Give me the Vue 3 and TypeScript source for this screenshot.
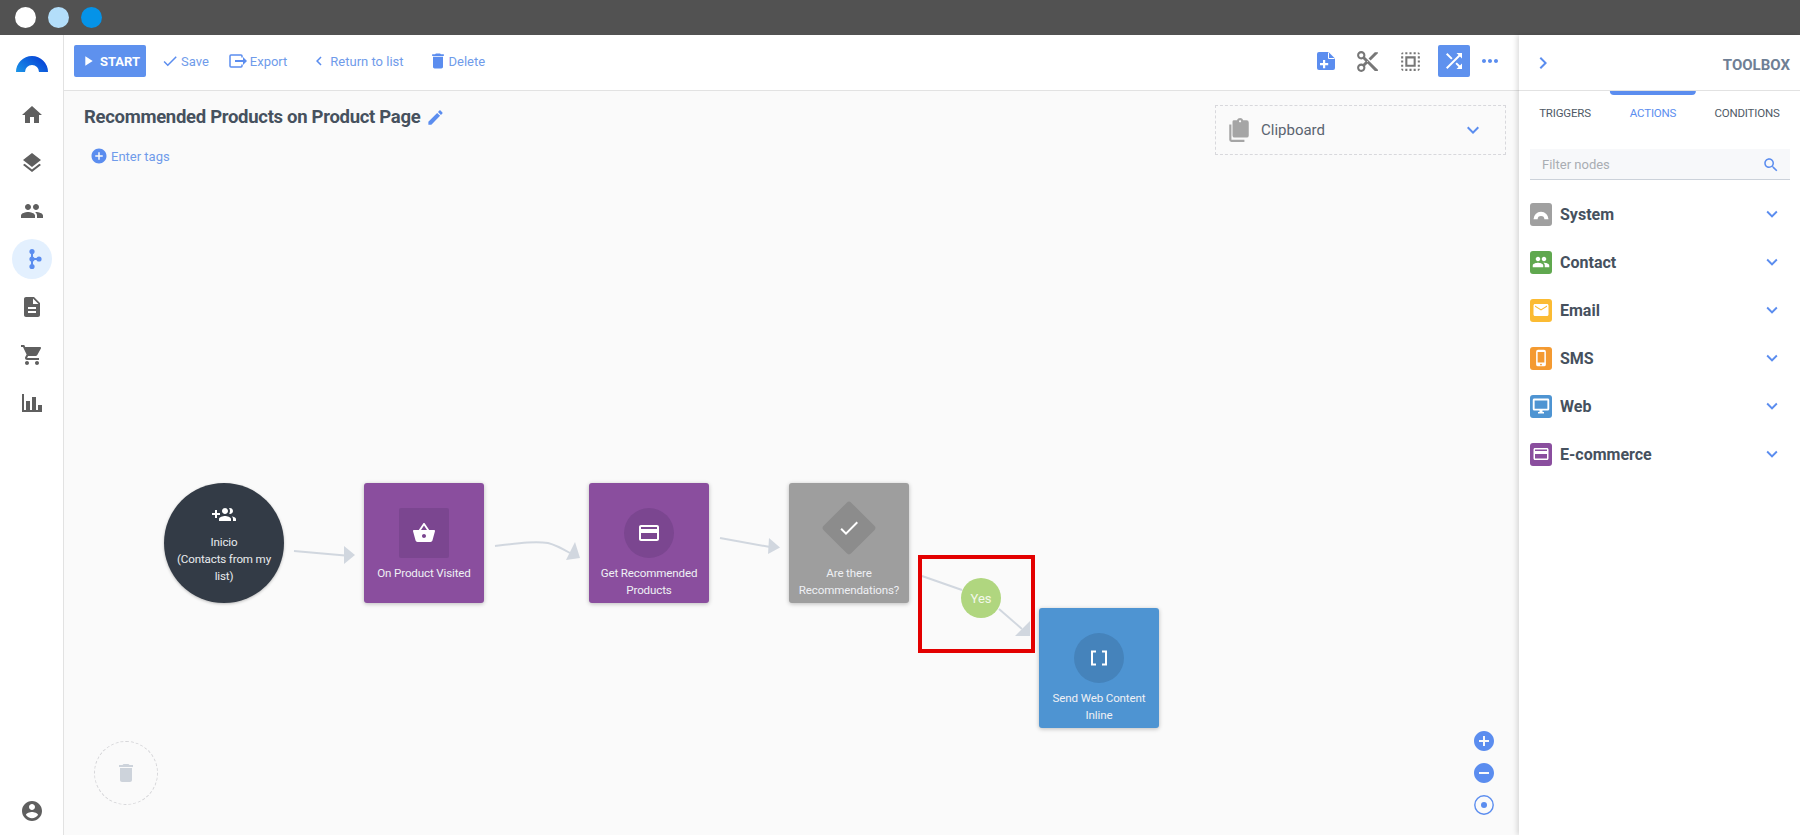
<script setup lang="ts">
const P = {
  home: 'M10 20v-6h4v6h5v-8h3L12 3 2 12h3v8z',
  layers: 'M11.99 18.54l-7.37-5.73L3 14.07l9 7 9-7-1.63-1.27-7.38 5.74zM12 16l7.36-5.73L21 9l-9-7-9 7 1.63 1.27L12 16z',
  people: 'M16 11c1.66 0 2.99-1.34 2.99-3S17.66 5 16 5c-1.66 0-3 1.34-3 3s1.34 3 3 3zm-8 0c1.66 0 2.99-1.34 2.99-3S9.66 5 8 5C6.34 5 5 6.34 5 8s1.34 3 3 3zm0 2c-2.33 0-7 1.17-7 3.5V19h14v-2.5c0-2.33-4.67-3.5-7-3.5zm8 0c-.29 0-.62.02-.97.05 1.16.84 1.97 1.97 1.97 3.45V19h6v-2.5c0-2.33-4.67-3.5-7-3.5z',
  doc: 'M14 2H6c-1.1 0-1.99.9-1.99 2L4 20c0 1.1.89 2 1.99 2H18c1.1 0 2-.9 2-2V8l-6-6zm2 16H8v-2h8v2zm0-4H8v-2h8v2zm-3-5V3.5L18.5 9H13z',
  cart: 'M7 18c-1.1 0-1.99.9-1.99 2S5.9 22 7 22s2-.9 2-2-.9-2-2-2zM1 2v2h2l3.6 7.59-1.35 2.45c-.16.28-.25.61-.25.96 0 1.1.9 2 2 2h12v-2H7.42c-.14 0-.25-.11-.25-.25l.03-.12.9-1.63h7.45c.75 0 1.41-.41 1.75-1.03l3.58-6.49c.08-.14.12-.31.12-.48 0-.55-.45-1-1-1H5.21l-.94-2H1zm16 16c-1.1 0-1.99.9-1.99 2s.89 2 1.99 2 2-.9 2-2-.9-2-2-2z',
  chart: 'M2 3h2v16h2v-9h4v9h2V6h4v13h2v-5h4v7H2z',
  account: 'M12 2C6.48 2 2 6.48 2 12s4.48 10 10 10 10-4.48 10-10S17.52 2 12 2zm0 3c1.66 0 3 1.34 3 3s-1.34 3-3 3-3-1.34-3-3 1.34-3 3-3zm0 14.2c-2.5 0-4.71-1.28-6-3.22.03-1.99 4-3.08 6-3.08 1.99 0 5.97 1.09 6 3.08-1.29 1.94-3.5 3.22-6 3.22z',
  play: 'M8 5v14l11-7z',
  check: 'M9 16.17L4.83 12l-1.42 1.41L9 19 21 7l-1.41-1.41z',
  del: 'M6 19c0 1.1.9 2 2 2h8c1.1 0 2-.9 2-2V7H6v12zM19 4h-3.5l-1-1h-5l-1 1H5v2h14V4z',
  edit: 'M3 17.25V21h3.75L17.81 9.94l-3.75-3.75L3 17.25zM20.71 7.04c.39-.39.39-1.02 0-1.41l-2.34-2.34c-.39-.39-1.02-.39-1.41 0l-1.83 1.83 3.75 3.75 1.83-1.83z',
  addCircle: 'M12 2C6.48 2 2 6.48 2 12s4.48 10 10 10 10-4.48 10-10S17.52 2 12 2zm5 11h-4v4h-2v-4H7v-2h4V7h2v4h4v2z',
  removeCircle: 'M12 2C6.48 2 2 6.48 2 12s4.48 10 10 10 10-4.48 10-10S17.52 2 12 2zm5 11H7v-2h10v2z',
  cut: 'M9.64 7.64c.23-.5.36-1.05.36-1.64 0-2.21-1.79-4-4-4S2 3.79 2 6s1.79 4 4 4c.59 0 1.14-.13 1.64-.36L10 12l-2.36 2.36C7.14 14.13 6.59 14 6 14c-2.21 0-4 1.79-4 4s1.79 4 4 4 4-1.79 4-4c0-.59-.13-1.14-.36-1.64L12 14l7 7h3v-1L9.64 7.64zM6 8c-1.1 0-2-.89-2-2s.9-2 2-2 2 .89 2 2-.9 2-2 2zm0 12c-1.1 0-2-.89-2-2s.9-2 2-2 2 .89 2 2-.9 2-2 2zm6-7.5c-.28 0-.5-.22-.5-.5s.22-.5.5-.5.5.22.5.5-.22.5-.5.5zM19 3l-6 6 2 2 7-7V3z',
  shuffle: 'M10.59 9.17L5.41 4 4 5.41l5.17 5.17 1.42-1.41zM14.5 4l2.04 2.04L4 18.59 5.41 20 17.96 7.46 20 9.5V4h-5.5zm.33 9.41l-1.41 1.41 3.13 3.13L14.5 20H20v-5.5l-2.04 2.04-3.13-3.13z',
  select: 'M3 5h2V3c-1.1 0-2 .9-2 2zm0 8h2v-2H3v2zm4 8h2v-2H7v2zM3 9h2V7H3v2zm10-6h-2v2h2V3zm6 0v2h2c0-1.1-.9-2-2-2zM5 21v-2H3c0 1.1.9 2 2 2zm-2-4h2v-2H3v2zM9 3H7v2h2V3zm2 18h2v-2h-2v2zm8-8h2v-2h-2v2zm0 8c1.1 0 2-.9 2-2h-2v2zm0-12h2V7h-2v2zm0 8h2v-2h-2v2zm-4 4h2v-2h-2v2zm0-16h2V3h-2v2zM7 17h10V7H7v10zm2-8h6v6H9V9z',
  more: 'M6 10c-1.1 0-2 .9-2 2s.9 2 2 2 2-.9 2-2-.9-2-2-2zm12 0c-1.1 0-2 .9-2 2s.9 2 2 2 2-.9 2-2-.9-2-2-2zm-6 0c-1.1 0-2 .9-2 2s.9 2 2 2 2-.9 2-2-.9-2-2-2z',
  down: 'M7.41 8.59L12 13.17l4.59-4.58L18 10l-6 6-6-6z',
  left: 'M15.41 7.41L14 6l-6 6 6 6 1.41-1.41L10.83 12z',
  right: 'M10 6L8.59 7.41 13.17 12l-4.58 4.59L10 18l6-6z',
  search: 'M15.5 14h-.79l-.28-.27C15.41 12.59 16 11.11 16 9.5 16 5.91 13.09 3 9.5 3S3 5.91 3 9.5 5.91 16 9.5 16c1.61 0 3.09-.59 4.23-1.57l.27.28v.79l5 4.99L20.49 19l-4.99-5zm-6 0C7.01 14 5 11.99 5 9.5S7.01 5 9.5 5 14 7.01 14 9.5 11.99 14 9.5 14z',
  clip: 'M3 7h2v14h12v2H5a2 2 0 0 1-2-2zM19 3h-3.2C15.4 1.8 14.3 1 13 1s-2.4.8-2.8 2H7a1.5 1.5 0 0 0-1 1.5V17a2 2 0 0 0 2 2h11a2 2 0 0 0 2-2V5a2 2 0 0 0-2-2zm-6 0c.55 0 1 .45 1 1s-.45 1-1 1-1-.45-1-1 .45-1 1-1z',
  basket: 'M17.21 9l-4.38-6.56c-.19-.28-.51-.42-.83-.42-.32 0-.64.14-.83.43L6.79 9H2c-.55 0-1 .45-1 1 0 .09.01.18.04.27l2.54 9.27c.23.84 1 1.46 1.92 1.46h13c.92 0 1.69-.62 1.93-1.46l2.54-9.27L23 10c0-.55-.45-1-1-1h-4.79zM9 9l3-4.4L15 9H9zm3 8c-1.1 0-2-.9-2-2s.9-2 2-2 2 .9 2 2-.9 2-2 2z',
  card: 'M20 4H4c-1.11 0-1.99.89-1.99 2L2 18c0 1.11.89 2 2 2h16c1.11 0 2-.89 2-2V6c0-1.11-.89-2-2-2zm0 14H4v-6h16v6zm0-10H4V6h16v2z',
  groupAdd: 'M8 10H5V7H3v3H0v2h3v3h2v-3h3v-2zm10 1c1.66 0 2.99-1.34 2.99-3S19.66 5 18 5c-.32 0-.63.05-.91.14.57.81.9 1.79.9 2.86s-.34 2.04-.9 2.86c.28.09.59.14.91.14zm-5 0c1.66 0 2.99-1.34 2.99-3S14.66 5 13 5s-3 1.34-3 3 1.34 3 3 3zm6.62 2.16c.83.73 1.38 1.66 1.38 2.84v2h3v-2c0-1.54-2.37-2.49-4.38-2.84zM13 13c-2 0-6 1-6 3v2h12v-2c0-2-4-3-6-3z',
  mail: 'M20 4H4c-1.1 0-1.99.9-1.99 2L2 18c0 1.1.9 2 2 2h16c1.1 0 2-.9 2-2V6c0-1.1-.9-2-2-2zm0 3.5l-8 5-8-5V6l8 5 8-5z',
  phone: 'M16 1H8a2.5 2.5 0 0 0-2.5 2.5v17A2.5 2.5 0 0 0 8 23h8a2.5 2.5 0 0 0 2.5-2.5v-17A2.5 2.5 0 0 0 16 1zm-4 21a1.2 1.2 0 1 1 0-2.4 1.2 1.2 0 0 1 0 2.4zm4.5-4h-9V4h9z',
  monitor: 'M21 2H3c-1.1 0-2 .9-2 2v12c0 1.1.9 2 2 2h7v2H8v2h8v-2h-2v-2h7c1.1 0 2-.9 2-2V4c0-1.1-.9-2-2-2zm-.5 13.5h-17v-11h17z',
  arc: 'M2 19a10 10 0 0 1 20 0h-5.5a4.5 4.5 0 0 0-9 0z'
}

const sideItems = [P.home, P.layers, P.people]
const sideItemsAfter = [P.doc, P.cart, P.chart]

const groups = [
  { name: 'System', color: '#a0a0a0', icon: P.arc },
  { name: 'Contact', color: '#60a84f', icon: P.people },
  { name: 'Email', color: '#fbbb33', icon: P.mail },
  { name: 'SMS', color: '#f49a31', icon: P.phone },
  { name: 'Web', color: '#4e94d2', icon: P.monitor },
  { name: 'E-commerce', color: '#8a4e9e', icon: P.card }
]

const OX = 64
const OY = 91
const nodes = [
  { x: 364, y: 483, kind: 'square', bg: '#8a4e9e', inner: '#7b4690', icon: P.basket, label: 'On Product Visited' },
  { x: 589, y: 483, kind: 'round', bg: '#8a4e9e', inner: '#7b4690', icon: P.card, label: 'Get Recommended Products' },
  { x: 789, y: 483, kind: 'diamond', bg: '#9e9e9e', inner: '#8c8c8c', icon: P.check, label: 'Are there Recommendations?' },
  { x: 1039, y: 608, kind: 'round', bg: '#4e94d2', inner: '#4583bb', icon: '', label: 'Send Web Content Inline' }
].map((n) => ({ ...n, style: { left: `${n.x - OX}px`, top: `${n.y - OY}px` } }))
</script>

<template>
  <div class="app">
    <div class="titlebar">
      <span class="dot white"></span>
      <span class="dot sky"></span>
      <span class="dot azure"></span>
    </div>
    <div class="body">
      <aside class="sidebar">
        <svg class="logo" viewBox="0 0 32 17" width="32" height="17">
          <defs>
            <linearGradient id="lg" x1="0" y1="1" x2="1" y2="0.4">
              <stop offset="0" stop-color="#1b96e8" />
              <stop offset="1" stop-color="#0742d6" />
            </linearGradient>
          </defs>
          <path d="M0 17A16 16 0 0 1 32 17H23A7 7 0 0 0 9 17z" fill="url(#lg)" />
        </svg>
        <div v-for="(d, i) in sideItems" :key="i" class="side-item">
          <svg viewBox="0 0 24 24" width="24" height="24"><path :d="d" /></svg>
        </div>
        <div class="side-item active">
          <svg viewBox="0 0 24 24" width="24" height="24">
            <path d="M11 5h2v14h-2zM12 11h7v2h-7z" />
            <circle cx="12" cy="4.5" r="2.6" />
            <circle cx="12" cy="12" r="2.6" />
            <circle cx="12" cy="19.5" r="2.6" />
            <circle cx="19" cy="12" r="2.6" />
          </svg>
        </div>
        <div v-for="(d, i) in sideItemsAfter" :key="'b' + i" class="side-item">
          <svg viewBox="0 0 24 24" width="24" height="24"><path :d="d" /></svg>
        </div>
        <div class="side-item account">
          <svg viewBox="0 0 24 24" width="24" height="24"><path :d="P.account" /></svg>
        </div>
      </aside>

      <main class="main">
        <div class="toolbar">
          <button class="start">
            <svg viewBox="0 0 24 24" width="16" height="16"><path :d="P.play" /></svg>
            START
          </button>
          <a class="tool save"><svg viewBox="0 0 24 24" width="18" height="18"><path :d="P.check" /></svg>Save</a>
          <a class="tool export">
            <svg viewBox="0 0 18 14" width="18" height="14" class="stroke">
              <path d="M13 3.5V2a1 1 0 0 0-1-1H2a1 1 0 0 0-1 1v10a1 1 0 0 0 1 1h10a1 1 0 0 0 1-1v-1.5" fill="none" stroke-width="1.5" />
              <path d="M6 6h8V3l4 4-4 4V8H6z" class="solid" />
            </svg>Export
          </a>
          <a class="tool back"><svg viewBox="0 0 24 24" width="18" height="18"><path :d="P.left" /></svg>Return to list</a>
          <a class="tool trash"><svg viewBox="0 0 24 24" width="20" height="20"><path :d="P.del" /></svg>Delete</a>

          <div class="tool-right">
            <svg class="blue t1" viewBox="0 0 18 18" width="18" height="18">
              <path d="M2 0h9.5L18 6.5V16a2 2 0 0 1-2 2H2a2 2 0 0 1-2-2V2a2 2 0 0 1 2-2z" />
              <path d="M11.5 0.5V6.5H17.5" fill="none" stroke="#fff" stroke-width="1" />
              <path d="M6 8h2.2v3h3v2.2h-3v3H6v-3H3V11h3z" fill="#fff" />
            </svg>
            <svg class="gray t2" viewBox="0 0 24 24" width="25" height="25"><path :d="P.cut" /></svg>
            <svg class="gray t3" viewBox="0 0 24 24" width="25" height="25"><path :d="P.select" /></svg>
            <span class="shuffle"><svg viewBox="0 0 24 24" width="24" height="24"><path :d="P.shuffle" /></svg></span>
            <svg class="blue t5" viewBox="0 0 24 24" width="24" height="24"><path :d="P.more" /></svg>
          </div>
        </div>

        <div class="canvas">
          <div class="canvas-head">
            <div class="head-left">
              <div class="title-row">
                <h1>Recommended Products on Product Page</h1>
                <svg class="blue" viewBox="0 0 24 24" width="19" height="19"><path :d="P.edit" /></svg>
              </div>
              <div class="tags">
                <svg class="blue" viewBox="0 0 24 24" width="18" height="18"><path :d="P.addCircle" /></svg>
                <span>Enter tags</span>
              </div>
            </div>
            <div class="clipboard">
              <svg class="clip" viewBox="0 0 24 24" width="26" height="26"><path :d="P.clip" /></svg>
              <span>Clipboard</span>
              <svg class="blue chev" viewBox="0 0 24 24" width="24" height="24"><path :d="P.down" /></svg>
            </div>
          </div>

          <svg class="wires" width="1455" height="744" viewBox="64 91 1455 744">
            <g fill="none" stroke="#d1d7df" stroke-width="2">
              <path d="M294 551L345 555.5" />
              <path d="M495 546C520 543 535 541 548 543C556 545 563 549 570 553" />
              <path d="M720 538L770 547" />
              <path d="M922 576L962 590" />
              <path d="M999 609L1022 629" />
            </g>
            <g fill="#d1d7df">
              <path d="M344 546L355 555L344 564z" />
              <path d="M575 542L580 558L566 560z" />
              <path d="M769 538L780 547.5L768 554z" />
              <path d="M1030 621L1030 636L1015 636z" />
            </g>
          </svg>

          <div class="start-node">
            <svg viewBox="0 0 24 24" width="24" height="24"><path :d="P.groupAdd" /></svg>
            <span>Inicio<br />(Contacts from my list)</span>
          </div>

          <div v-for="n in nodes" :key="n.label" class="node" :style="{ ...n.style, background: n.bg }">
            <div class="badge" :class="n.kind" :style="{ background: n.inner }">
              <svg v-if="n.icon" :class="{ unrotate: n.kind === 'diamond' }" viewBox="0 0 24 24" width="24" height="24"><path :d="n.icon" /></svg>
              <svg v-else viewBox="0 0 24 24" width="24" height="24">
                <path d="M9 5.5H5v13h4M15 5.5h4v13h-4" fill="none" stroke="#fff" stroke-width="2" />
              </svg>
            </div>
            <div class="label">{{ n.label }}</div>
          </div>

          <div class="yes">Yes</div>
          <div class="highlight"></div>

          <div class="bin">
            <svg viewBox="0 0 24 24" width="24" height="24"><path :d="P.del" /></svg>
          </div>

          <div class="zoom">
            <svg viewBox="2 2 20 20" width="20" height="20"><path :d="P.addCircle" /></svg>
            <svg viewBox="2 2 20 20" width="20" height="20"><path :d="P.removeCircle" /></svg>
            <svg viewBox="0 0 20 20" width="20" height="20">
              <circle cx="10" cy="10" r="9.2" fill="none" stroke="#5b8def" stroke-width="1.4" />
              <circle cx="10" cy="10" r="3" />
            </svg>
          </div>
        </div>
      </main>

      <aside class="panel">
        <div class="panel-head">
          <svg class="blue" viewBox="0 0 24 24" width="24" height="24"><path :d="P.right" /></svg>
          <span>TOOLBOX</span>
        </div>
        <div class="tabs">
          <span class="tab">TRIGGERS</span>
          <span class="tab on">ACTIONS</span>
          <span class="tab">CONDITIONS</span>
        </div>
        <div class="filter">
          <span>Filter nodes</span>
          <svg class="blue" viewBox="0 0 24 24" width="18" height="18"><path :d="P.search" /></svg>
        </div>
        <div class="groups">
          <div v-for="g in groups" :key="g.name" class="group">
            <span class="gicon" :style="{ background: g.color }">
              <svg viewBox="0 0 24 24" width="18" height="18"><path :d="g.icon" /></svg>
            </span>
            <span class="gname">{{ g.name }}</span>
            <svg class="blue" viewBox="0 0 24 24" width="22" height="22"><path :d="P.down" /></svg>
          </div>
        </div>
      </aside>
    </div>
  </div>
</template>

<style>
html, body { margin: 0; padding: 0; overflow: hidden; }
</style>

<style scoped>
.app {
  width: 1800px;
  height: 835px;
  display: flex;
  flex-direction: column;
  font-family: Roboto, "Noto Sans", sans-serif;
  color: #46515e;
  background: #fff;
  overflow: hidden;
}
svg { display: block; flex: none; }
.blue { fill: #5b8def; }
.gray { fill: #777; }

.titlebar {
  height: 35px;
  background: #525252;
  display: flex;
  align-items: center;
  gap: 12px;
  padding-left: 15px;
  flex: none;
}
.dot { width: 21px; height: 21px; border-radius: 50%; }
.dot.white { background: #fff; }
.dot.sky { background: #b3defa; }
.dot.azure { background: #0593e8; }

.body { flex: 1; display: flex; min-height: 0; }

.sidebar {
  width: 63px;
  border-right: 1px solid #e2e2e2;
  display: flex;
  flex-direction: column;
  align-items: center;
  padding-top: 20px;
  flex: none;
}
.logo { margin-bottom: 23px; }
.side-item {
  width: 40px;
  height: 40px;
  margin-bottom: 8px;
  display: flex;
  align-items: center;
  justify-content: center;
  border-radius: 50%;
  fill: #5f5f5f;
}
.side-item.active { background: #e3f0fe; fill: #5b8def; }
.side-item.account { margin-top: auto; margin-bottom: 4px; }

.main { flex: 1; display: flex; flex-direction: column; min-width: 0; }

.toolbar {
  height: 52px;
  padding: 0 17px 3px 10px;
  border-bottom: 1px solid #e2e2e2;
  display: flex;
  align-items: center;
  flex: none;
  box-sizing: content-box;
}
.start {
  width: 72px;
  height: 32px;
  border: 0;
  border-radius: 2px;
  background: #5e91ee;
  color: #fff;
  font: 700 13px Roboto, sans-serif;
  display: flex;
  align-items: center;
  justify-content: center;
  gap: 4px;
  fill: #fff;
  padding: 0;
}
.tool {
  display: flex;
  align-items: center;
  color: #6f9bea;
  font-size: 13px;
  fill: #5b8def;
}
.tool svg { margin-right: 2px; }
.save { margin-left: 15px; }
.export { margin-left: 20px; }
.export svg { margin-right: 3px; }
.back { margin-left: 23px; }
.trash { margin-left: 24px; }
.trash svg { margin-right: 1px; }
.stroke { stroke: #5b8def; }
.stroke .solid { stroke: none; fill: #5b8def; }

.tool-right {
  margin-left: auto;
  display: flex;
  align-items: center;
}
.t2 { margin-left: 20px; }
.t3 { margin-left: 18px; }
.shuffle {
  width: 32px;
  height: 32px;
  border-radius: 2px;
  background: #5e91ee;
  fill: #fff;
  display: flex;
  align-items: center;
  justify-content: center;
  margin-left: 15px;
}
.t5 { margin-left: 8px; }

.canvas {
  flex: 1;
  position: relative;
  background: #fafafa;
  min-height: 0;
}
.canvas-head {
  display: flex;
  justify-content: space-between;
  padding: 14px 13px 0 20px;
}
.title-row { display: flex; align-items: center; gap: 6px; height: 24px; }
h1 { margin: 0; font-size: 18.5px; letter-spacing: -.3px; font-weight: 700; color: #46515e; line-height: 24px; }
.tags {
  margin: 18px 0 0 6px;
  display: flex;
  align-items: center;
  gap: 3px;
  color: #6f9bea;
  font-size: 13px;
}
.clipboard {
  width: 291px;
  height: 50px;
  box-sizing: border-box;
  border: 1px dashed #d8d8dc;
  display: flex;
  align-items: center;
  padding: 0 20px 0 10px;
  gap: 9px;
  font-size: 15px;
  color: #5a6470;
}
.clipboard span { flex: 1; padding-bottom: 1px; }
.clip { fill: #a5a5a5; }

.wires { position: absolute; left: 0; top: 0; pointer-events: none; }

.start-node {
  position: absolute;
  left: 100px;
  top: 392px;
  width: 120px;
  height: 120px;
  border-radius: 50%;
  background: #333b46;
  color: #e9ebee;
  box-shadow: 0 1px 3px rgba(0, 0, 0, .25);
  display: flex;
  flex-direction: column;
  align-items: center;
  box-sizing: border-box;
  padding: 20px 10px 0;
  text-align: center;
  font-size: 11.6px;
  letter-spacing: -.15px;
  line-height: 17px;
  fill: #fff;
}
.start-node svg { margin-bottom: 7px; }

.node {
  position: absolute;
  width: 120px;
  height: 120px;
  border-radius: 3px;
  box-shadow: 0 1px 4px rgba(0, 0, 0, .25);
  display: flex;
  flex-direction: column;
  align-items: center;
  color: #eef0f4;
  fill: #fff;
}
.badge {
  margin-top: 25px;
  width: 50px;
  height: 50px;
  display: flex;
  align-items: center;
  justify-content: center;
  flex: none;
}
.badge.square { border-radius: 2px; }
.badge.round { border-radius: 50%; }
.badge.diamond {
  margin-top: 20px;
  margin-bottom: 5px;
  transform: rotate(45deg) scale(.78);
  border-radius: 4px;
}
.unrotate { transform: rotate(-45deg) scale(1.28); }
.label {
  margin-top: 7px;
  padding: 0 4px;
  text-align: center;
  font-size: 11.6px;
  letter-spacing: -.15px;
  line-height: 17px;
}

.yes {
  position: absolute;
  left: 897px;
  top: 487px;
  width: 40px;
  height: 40px;
  border-radius: 50%;
  background: #b0d67f;
  color: #f3f8ea;
  display: flex;
  align-items: center;
  justify-content: center;
  font-size: 13px;
}
.highlight {
  position: absolute;
  left: 854px;
  top: 464px;
  width: 117px;
  height: 98px;
  box-sizing: border-box;
  border: 4px solid #e30000;
}

.bin {
  position: absolute;
  left: 30px;
  top: 650px;
  width: 64px;
  height: 64px;
  box-sizing: border-box;
  border: 1px dashed #d5d5d8;
  border-radius: 50%;
  display: flex;
  align-items: center;
  justify-content: center;
  fill: #cdd3db;
}
.zoom {
  position: absolute;
  right: 25px;
  top: 640px;
  display: flex;
  flex-direction: column;
  gap: 12px;
  fill: #5b8def;
}

.panel {
  width: 281px;
  flex: none;
  position: relative;
  background: #fff;
  box-shadow: -2px 0 5px rgba(0, 0, 0, .14);
  display: flex;
  flex-direction: column;
}
.panel-head {
  height: 55px;
  border-bottom: 1px solid #e2e2e2;
  display: flex;
  align-items: center;
  justify-content: space-between;
  padding: 0 10px 0 12px;
  font-size: 15px;
  font-weight: 700;
  color: #6f7f95;
  flex: none;
  box-sizing: content-box;
}
.panel-head span { padding-top: 5px; }
.tabs {
  display: flex;
  height: 58px;
  font-size: 11.5px;
  letter-spacing: -.2px;
  color: #4f5a66;
  position: relative;
  flex: none;
}
.tab {
  position: absolute;
  top: 15px;
  transform: translateX(-50%);
  white-space: nowrap;
}
.tab:nth-child(1) { left: 46px; }
.tab:nth-child(2) { left: 134px; }
.tab:nth-child(3) { left: 228px; }
.tab.on { color: #5b8def; }
.tab.on::before {
  content: "";
  position: absolute;
  left: 50%;
  top: -15px;
  width: 86px;
  height: 4px;
  margin-left: -43px;
  background: #5b8def;
  border-radius: 0 0 4px 4px;
}
.filter {
  margin: 0 10px 0 11px;
  height: 31px;
  box-sizing: border-box;
  background: #f7f8fa;
  border-bottom: 1px solid #ccd2da;
  display: flex;
  align-items: center;
  justify-content: space-between;
  padding: 1px 10px 0 12px;
  font-size: 13px;
  color: #a9adb3;
}
.groups { margin-top: 10px; padding: 0 17px 0 11px; }
.group {
  height: 48px;
  display: flex;
  align-items: center;
  gap: 8px;
}
.gicon {
  width: 22px;
  height: 23px;
  border-radius: 3px;
  display: flex;
  align-items: center;
  justify-content: center;
  fill: #fff;
  flex: none;
}
.gname { flex: 1; font-size: 16px; font-weight: 700; color: #46515e; }
</style>
